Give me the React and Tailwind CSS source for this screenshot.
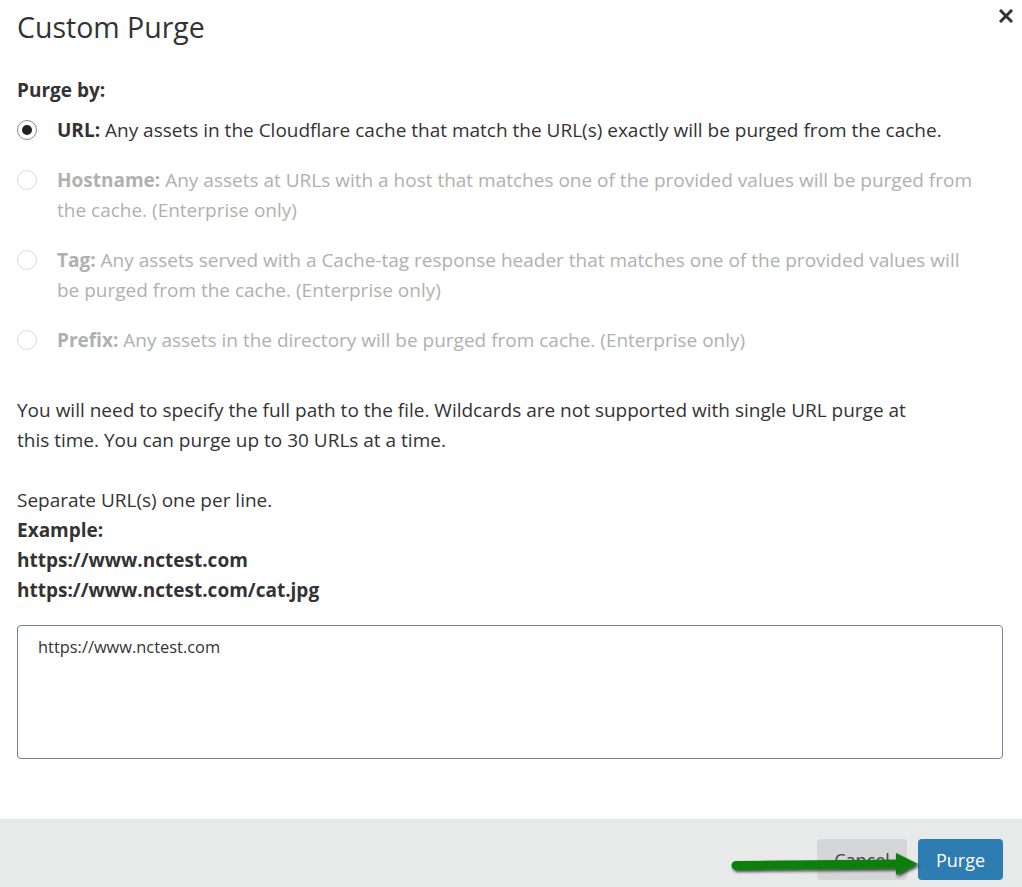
import React from "react";

function Radio({ checked, disabled }) {
  return (
    <span
      className={`mt-[5px] flex h-[20px] w-[20px] shrink-0 items-center justify-center rounded-full border ${
        disabled ? "border-[#d9d9d9] bg-white" : "border-[#8a8a8a] bg-white"
      }`}
    >
      {checked && <span className="h-[10px] w-[10px] rounded-full bg-[#222]" />}
    </span>
  );
}

function Option({ label, children, checked, disabled }) {
  return (
    <div className="flex items-start gap-[20px]">
      <Radio checked={checked} disabled={disabled} />
      <div className={disabled ? "text-[#b0b0b0]" : "text-[#333]"}>
        <span className="font-bold">{label}</span> {children}
      </div>
    </div>
  );
}

export default function App() {
  return (
    <div
      className="relative h-[887px] w-[1022px] overflow-hidden bg-white text-[19px] leading-[30px] text-[#333]"
      style={{ fontFamily: '"Open Sans", "Noto Sans", sans-serif' }}
    >
      <div className="px-[17px]">
        <h1 className="pt-[8px] text-[28.5px] leading-[38px] text-[#333]">Custom Purge</h1>
        <button className="absolute right-[4px] top-[4px] flex h-[24px] w-[24px] items-center justify-center text-[#333]">
          <svg width="14" height="14" viewBox="0 0 14 14">
            <path d="M2 2 L12 12 M12 2 L2 12" stroke="#333" strokeWidth="3" strokeLinecap="square" />
          </svg>
        </button>

        <div className="mt-[29px] font-bold">Purge by:</div>
        <div className="mt-[10px] flex flex-col gap-[20px]">
          <Option label="URL:" checked>
            Any assets in the Cloudflare cache that match the URL(s) exactly will be purged from the cache.
          </Option>
          <Option label="Hostname:" disabled>
            Any assets at URLs with a host that matches one of the provided values will be purged from
            <br />
            the cache. (Enterprise only)
          </Option>
          <Option label="Tag:" disabled>
            Any assets served with a Cache-tag response header that matches one of the provided values will
            <br />
            be purged from the cache. (Enterprise only)
          </Option>
          <Option label="Prefix:" disabled>
            Any assets in the directory will be purged from cache. (Enterprise only)
          </Option>
        </div>

        <p className="mt-[40px]">
          You will need to specify the full path to the file. Wildcards are not supported with single URL purge at
          <br />
          this time. You can purge up to 30 URLs at a time.
        </p>
        <p className="mt-[30px]">Separate URL(s) one per line.</p>
        <p className="font-bold">Example:</p>
        <p className="font-bold">https://www.nctest.com</p>
        <p className="font-bold">https://www.nctest.com/cat.jpg</p>

        <div className="mt-[20px] h-[134px] w-[986px] rounded-[4px] border border-[#6f8597] px-[20px] py-[9px] text-[16.4px] leading-[24px] text-[#333]">
          https://www.nctest.com
        </div>
      </div>

      <div className="absolute bottom-0 left-0 right-0 flex h-[68px] items-start justify-end gap-[11px] bg-[#e8e9e9] pr-[19px] pt-[20px]">
        <button className="h-[41px] w-[90px] rounded-[4px] bg-[#d5d6d8] text-[18px] text-[#444]">Cancel</button>
        <button className="h-[41px] w-[85px] rounded-[4px] bg-[#2d7cb2] text-[18px] text-white">Purge</button>
      </div>

      <svg className="absolute left-[728px] top-[848px]" width="200" height="34" viewBox="0 0 200 34">
        <defs>
          <filter id="sh" x="-10%" y="-50%" width="120%" height="200%">
            <feDropShadow dx="1.5" dy="2" stdDeviation="1.5" floodColor="#000" floodOpacity="0.7" />
          </filter>
        </defs>
        <g filter="url(#sh)">
          <path d="M8 17.5 L 176 16" stroke="#0f7f0f" strokeWidth="9" strokeLinecap="round" fill="none" />
          <path d="M168 5 L 190 16 L 168 27 Z" fill="#0f7f0f" />
        </g>
      </svg>
    </div>
  );
}
